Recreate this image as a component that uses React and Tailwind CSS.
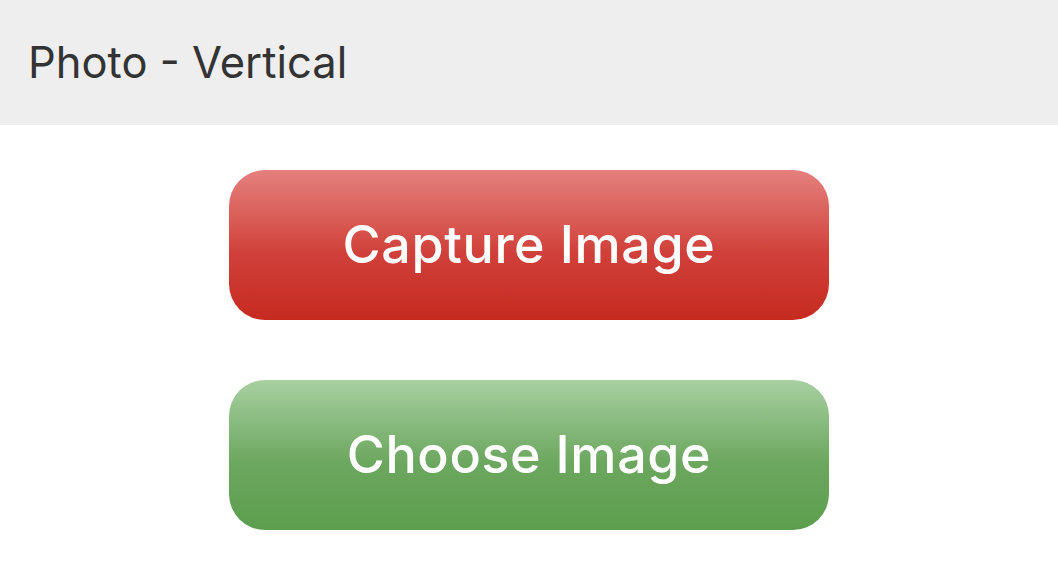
export default function App() {
  return (
    <div className="w-[1058px] h-[571px] bg-white" style={{ fontFamily: "Inter, 'Noto Sans', sans-serif" }}>
      <div className="h-[125px] bg-[#eeeeee] flex items-center pl-[28px]">
        <span className="text-[43.5px] leading-none text-[#333333] tracking-[0px]">Photo - Vertical</span>
      </div>
      <div className="flex flex-col items-center gap-[60px] pt-[45px]">
        <button className="w-[600px] h-[150px] rounded-[36px] bg-gradient-to-b from-[#e4807d] via-[#d0403a] via-55% to-[#c62a1f] text-white text-[52px] font-medium tracking-[0.6px]">
          Capture Image
        </button>
        <button className="w-[600px] h-[150px] rounded-[36px] bg-gradient-to-b from-[#a8d0a1] via-[#6ca75f] via-55% to-[#5c9e4d] text-white text-[52px] font-medium tracking-[0.6px]">
          Choose Image
        </button>
      </div>
    </div>
  );
}
